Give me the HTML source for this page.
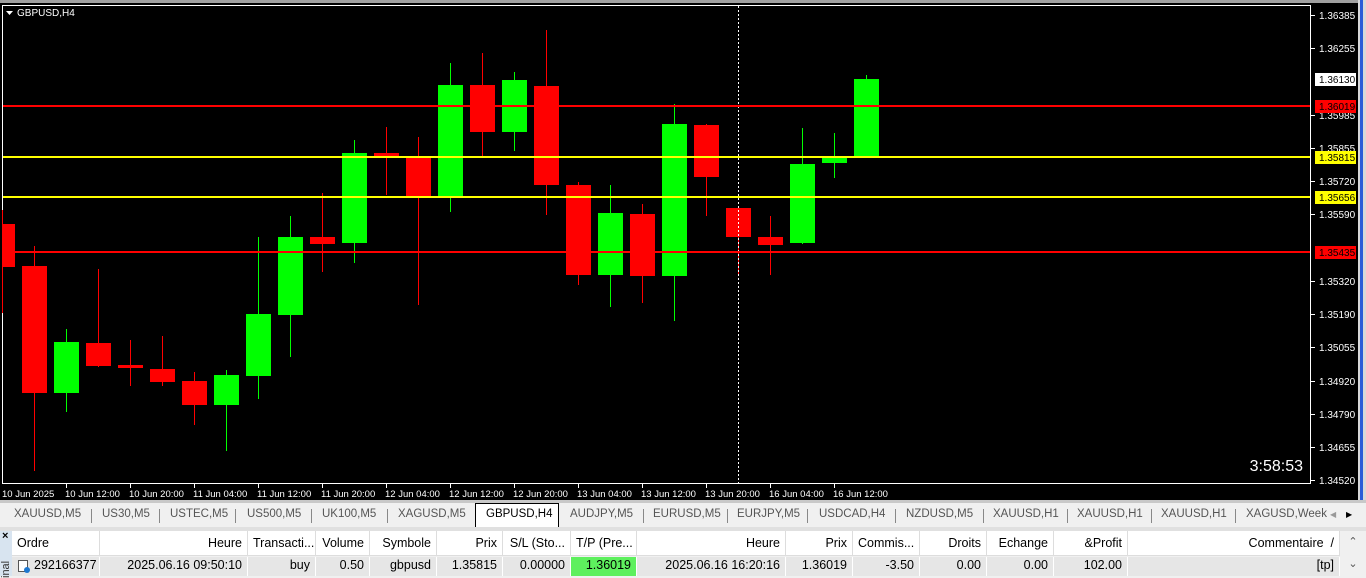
<!DOCTYPE html>
<html><head><meta charset="utf-8"><style>
*{margin:0;padding:0;box-sizing:border-box}
body{width:1366px;height:576px;overflow:hidden;background:#f0f0f0;font-family:"Liberation Sans",sans-serif;position:relative}
.abs{position:absolute}
.tabs{left:0;top:503px;width:1340px;height:24px;background:#f0f0f0;font-size:11.5px;color:#555}
.tab{position:absolute;top:5px}
.sep{position:absolute;top:6px;width:1px;height:14px;background:#888}
.hdr,.row{left:12px;width:1328px;font-size:12.5px;color:#000}
.hdr{top:531px;height:25px;background:#fff;border-bottom:1px solid #ddd}
.row{top:557px;height:19px;background:#e6e6e6}
.c{position:absolute;top:0;height:100%;border-right:1px solid #ddd;padding:0 5px;line-height:25px;white-space:nowrap;overflow:hidden}
.row .c{line-height:17px;border-right:1px solid #fff}
.r{text-align:right}
</style></head><body>
<div class="abs" style="left:0;top:0;width:1358px;height:500px;background:#000"></div>
<div class="abs" style="left:0;top:0;width:1366px;height:3px;background:#a0a0a0"></div>
<div class="abs" style="left:1358px;top:0;width:8px;height:500px;background:#d8d8d8"></div>
<div class="abs" style="left:1360px;top:0;width:3px;height:500px;background:#2a5bd7"></div>
<svg class="abs" style="left:0;top:0" width="1358" height="500" font-family="Liberation Sans, sans-serif">
<rect x="2.5" y="5.5" width="1308" height="478" fill="none" stroke="#fff"/>
<g fill="#f00">
<rect x="2" y="224" width="13" height="43"/><rect x="2" y="210" width="1" height="103"/>
<rect x="34" y="246" width="1" height="225"/><rect x="22" y="266" width="25" height="127"/>
<rect x="98" y="269" width="1" height="98"/><rect x="86" y="343" width="25" height="23"/>
<rect x="130" y="340" width="1" height="46"/><rect x="118" y="365" width="25" height="3"/>
<rect x="162" y="336" width="1" height="50"/><rect x="150" y="369" width="25" height="13"/>
<rect x="194" y="372" width="1" height="53"/><rect x="182" y="381" width="25" height="24"/>
<rect x="322" y="193" width="1" height="79"/><rect x="310" y="237" width="25" height="7"/>
<rect x="386" y="127" width="1" height="68"/><rect x="374" y="153" width="25" height="3"/>
<rect x="418" y="137" width="1" height="168"/><rect x="406" y="156" width="25" height="40"/>
<rect x="482" y="53" width="1" height="104"/><rect x="470" y="85" width="25" height="47"/>
<rect x="546" y="30" width="1" height="185"/><rect x="534" y="86" width="25" height="99"/>
<rect x="578" y="182" width="1" height="103"/><rect x="566" y="185" width="25" height="90"/>
<rect x="642" y="204" width="1" height="99"/><rect x="630" y="214" width="25" height="62"/>
<rect x="706" y="124" width="1" height="92"/><rect x="694" y="125" width="25" height="52"/>
<rect x="738" y="206" width="1" height="70"/><rect x="726" y="208" width="25" height="29"/>
<rect x="770" y="216" width="1" height="59"/><rect x="758" y="237" width="25" height="8"/>
</g>
<g fill="#0f0">
<rect x="66" y="329" width="1" height="83"/><rect x="54" y="342" width="25" height="51"/>
<rect x="226" y="370" width="1" height="81"/><rect x="214" y="375" width="25" height="30"/>
<rect x="258" y="237" width="1" height="162"/><rect x="246" y="314" width="25" height="62"/>
<rect x="290" y="216" width="1" height="141"/><rect x="278" y="237" width="25" height="78"/>
<rect x="354" y="140" width="1" height="123"/><rect x="342" y="153" width="25" height="90"/>
<rect x="450" y="63" width="1" height="149"/><rect x="438" y="85" width="25" height="111"/>
<rect x="514" y="72" width="1" height="79"/><rect x="502" y="80" width="25" height="52"/>
<rect x="610" y="185" width="1" height="122"/><rect x="598" y="213" width="25" height="62"/>
<rect x="674" y="104" width="1" height="217"/><rect x="662" y="124" width="25" height="152"/>
<rect x="802" y="128" width="1" height="116"/><rect x="790" y="164" width="25" height="79"/>
<rect x="834" y="133" width="1" height="45"/><rect x="822" y="156" width="25" height="7"/>
<rect x="866" y="75" width="1" height="82"/><rect x="854" y="79" width="25" height="77"/>
</g>
<line x1="738.5" y1="6" x2="738.5" y2="483" stroke="#fff" stroke-dasharray="2,2"/>
<rect x="3" y="105" width="1307" height="2" fill="#f00"/>
<rect x="3" y="156" width="1307" height="2" fill="#ff0"/>
<rect x="3" y="196" width="1307" height="2" fill="#ff0"/>
<rect x="3" y="251" width="1307" height="2" fill="#f00"/>
<path d="M6 11h7l-3.5 4z" fill="#fff"/>
<text x="17" y="16" fill="#fff" font-size="10">GBPUSD,H4</text>
<text x="1303" y="471" fill="#fff" font-size="16" text-anchor="end">3:58:53</text>
<g fill="#fff" font-size="10">
<g stroke="#fff"><line x1="1311" y1="15.5" x2="1315" y2="15.5"/><line x1="1311" y1="48.5" x2="1315" y2="48.5"/><line x1="1311" y1="115.5" x2="1315" y2="115.5"/><line x1="1311" y1="148.5" x2="1315" y2="148.5"/><line x1="1311" y1="181.5" x2="1315" y2="181.5"/><line x1="1311" y1="214.5" x2="1315" y2="214.5"/><line x1="1311" y1="281.5" x2="1315" y2="281.5"/><line x1="1311" y1="314.5" x2="1315" y2="314.5"/><line x1="1311" y1="347.5" x2="1315" y2="347.5"/><line x1="1311" y1="381.5" x2="1315" y2="381.5"/><line x1="1311" y1="414.5" x2="1315" y2="414.5"/><line x1="1311" y1="447.5" x2="1315" y2="447.5"/><line x1="1311" y1="480.5" x2="1315" y2="480.5"/></g>
<text x="1319" y="19">1.36385</text><text x="1319" y="52">1.36255</text><text x="1319" y="119">1.35985</text><text x="1319" y="152">1.35855</text><text x="1319" y="185">1.35720</text><text x="1319" y="218">1.35590</text><text x="1319" y="285">1.35320</text><text x="1319" y="318">1.35190</text><text x="1319" y="351">1.35055</text><text x="1319" y="385">1.34920</text><text x="1319" y="418">1.34790</text><text x="1319" y="451">1.34655</text><text x="1319" y="484">1.34520</text>
<rect x="1315" y="73" width="41" height="13" fill="#fff"/><text x="1319" y="83" fill="#000">1.36130</text>
<rect x="1315" y="100" width="41" height="13" fill="#f00"/><text x="1319" y="110" fill="#000">1.36019</text>
<rect x="1315" y="151" width="41" height="13" fill="#ff0"/><text x="1319" y="161" fill="#000">1.35815</text>
<rect x="1315" y="191" width="41" height="13" fill="#ff0"/><text x="1319" y="201" fill="#000">1.35656</text>
<rect x="1315" y="246" width="41" height="13" fill="#f00"/><text x="1319" y="256" fill="#000">1.35435</text>
</g>
<g fill="#fff" font-size="9.5">
<g stroke="#fff"><line x1="66.5" y1="484" x2="66.5" y2="488"/><line x1="130.5" y1="484" x2="130.5" y2="488"/><line x1="194.5" y1="484" x2="194.5" y2="488"/><line x1="258.5" y1="484" x2="258.5" y2="488"/><line x1="322.5" y1="484" x2="322.5" y2="488"/><line x1="386.5" y1="484" x2="386.5" y2="488"/><line x1="450.5" y1="484" x2="450.5" y2="488"/><line x1="514.5" y1="484" x2="514.5" y2="488"/><line x1="578.5" y1="484" x2="578.5" y2="488"/><line x1="642.5" y1="484" x2="642.5" y2="488"/><line x1="706.5" y1="484" x2="706.5" y2="488"/><line x1="770.5" y1="484" x2="770.5" y2="488"/><line x1="834.5" y1="484" x2="834.5" y2="488"/></g>
<text x="2" y="497">10 Jun 2025</text><text x="65" y="497">10 Jun 12:00</text><text x="129" y="497">10 Jun 20:00</text><text x="193" y="497">11 Jun 04:00</text><text x="257" y="497">11 Jun 12:00</text><text x="321" y="497">11 Jun 20:00</text><text x="385" y="497">12 Jun 04:00</text><text x="449" y="497">12 Jun 12:00</text><text x="513" y="497">12 Jun 20:00</text><text x="577" y="497">13 Jun 04:00</text><text x="641" y="497">13 Jun 12:00</text><text x="705" y="497">13 Jun 20:00</text><text x="769" y="497">16 Jun 04:00</text><text x="833" y="497">16 Jun 12:00</text>
</g>
</svg>
<div class="abs" style="left:0;top:500px;width:1366px;height:3px;background:#c8c8c8"></div>
<div class="abs tabs">
<span class="tab" style="left:14px">XAUUSD,M5</span><span class="sep" style="left:91px"></span>
<span class="tab" style="left:102px">US30,M5</span><span class="sep" style="left:159px"></span>
<span class="tab" style="left:170px">USTEC,M5</span><span class="sep" style="left:235px"></span>
<span class="tab" style="left:247px">US500,M5</span><span class="sep" style="left:311px"></span>
<span class="tab" style="left:322px">UK100,M5</span><span class="sep" style="left:387px"></span>
<span class="tab" style="left:398px">XAGUSD,M5</span>
<div class="abs" style="left:475px;top:0;width:84px;height:24px;background:#fff;border:1px solid #000;border-bottom:none"></div>
<span class="tab" style="left:486px;color:#000">GBPUSD,H4</span>
<span class="tab" style="left:570px">AUDJPY,M5</span><span class="sep" style="left:643px"></span>
<span class="tab" style="left:653px">EURUSD,M5</span><span class="sep" style="left:727px"></span>
<span class="tab" style="left:737px">EURJPY,M5</span><span class="sep" style="left:807px"></span>
<span class="tab" style="left:819px">USDCAD,H4</span><span class="sep" style="left:895px"></span>
<span class="tab" style="left:906px">NZDUSD,M5</span><span class="sep" style="left:983px"></span>
<span class="tab" style="left:993px">XAUUSD,H1</span><span class="sep" style="left:1067px"></span>
<span class="tab" style="left:1077px">XAUUSD,H1</span><span class="sep" style="left:1151px"></span>
<span class="tab" style="left:1161px">XAUUSD,H1</span><span class="sep" style="left:1235px"></span>
<span class="tab" style="left:1246px">XAGUSD,Week</span>
<span class="tab" style="left:1330px;font-size:8px;top:7px;color:#999">◀</span><span class="tab" style="left:1346px;font-size:8px;top:7px;color:#000">▶</span>
</div>
<div class="abs" style="left:0;top:527px;width:1366px;height:4px;background:#e0e0e0"></div>
<div class="abs" style="left:0;top:531px;width:12px;height:45px;background:#d8e4f0"></div>
<div class="abs" style="left:2px;top:530px;font-size:11px;font-weight:bold">×</div>
<div class="abs" style="left:0;font-size:11px;transform:rotate(-90deg);transform-origin:0 0;top:578px;color:#333">inal</div>
<div class="abs hdr">
<div class="c" style="left:0;width:88px">Ordre</div>
<div class="c r" style="left:88px;width:148px">Heure</div>
<div class="c" style="left:236px;width:68px">Transacti...</div>
<div class="c r" style="left:304px;width:54px">Volume</div>
<div class="c r" style="left:358px;width:67px">Symbole</div>
<div class="c r" style="left:425px;width:66px">Prix</div>
<div class="c r" style="left:491px;width:68px">S/L (Sto...</div>
<div class="c r" style="left:559px;width:66px">T/P (Pre...</div>
<div class="c r" style="left:625px;width:149px">Heure</div>
<div class="c r" style="left:774px;width:67px">Prix</div>
<div class="c r" style="left:841px;width:67px">Commis...</div>
<div class="c r" style="left:908px;width:67px">Droits</div>
<div class="c r" style="left:975px;width:67px">Echange</div>
<div class="c r" style="left:1042px;width:74px">&amp;Profit</div>
<div class="c r" style="left:1116px;width:212px">Commentaire &nbsp;/</div>
</div>
<div class="abs row">
<div class="c" style="left:0;width:88px;padding-left:22px">292166377</div>
<div class="abs" style="left:6px;top:3px;width:10px;height:12px;border:1px solid #555;background:#fff"></div>
<div class="abs" style="left:12px;top:10px;width:6px;height:6px;border-radius:50%;background:#1e78d0"></div>
<div class="c r" style="left:88px;width:148px">2025.06.16 09:50:10</div>
<div class="c r" style="left:236px;width:68px">buy</div>
<div class="c r" style="left:304px;width:54px">0.50</div>
<div class="c r" style="left:358px;width:67px">gbpusd</div>
<div class="c r" style="left:425px;width:66px">1.35815</div>
<div class="c r" style="left:491px;width:68px">0.00000</div>
<div class="c r" style="left:559px;width:66px;background:#5ef05e">1.36019</div>
<div class="c r" style="left:625px;width:149px">2025.06.16 16:20:16</div>
<div class="c r" style="left:774px;width:67px">1.36019</div>
<div class="c r" style="left:841px;width:67px">-3.50</div>
<div class="c r" style="left:908px;width:67px">0.00</div>
<div class="c r" style="left:975px;width:67px">0.00</div>
<div class="c r" style="left:1042px;width:74px">102.00</div>
<div class="c r" style="left:1116px;width:212px">[tp]</div>
</div>
<div class="abs" style="left:1340px;top:531px;width:26px;height:45px;background:#f0f0f0;font-size:11px;color:#555;text-align:center;line-height:22px">⌃<br>⌄</div>
</body></html>
